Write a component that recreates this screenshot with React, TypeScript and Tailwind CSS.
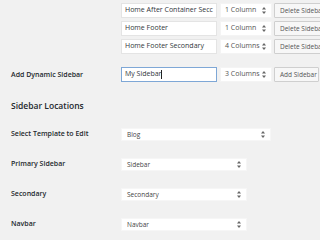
import React from "react";

const font = { fontFamily: '"Open Sans", "Liberation Sans", sans-serif' };

const Arrows: React.FC = () => (
    <svg width="4" height="7" viewBox="0 0 4 7" className="shrink-0">
        <path d="M2 0 L4 2.6 L0 2.6 Z" fill="#666" />
        <path d="M2 7 L4 4.4 L0 4.4 Z" fill="#666" />
    </svg>
);

const SmallSelect: React.FC<{ label: string }> = ({ label }) => (
    <div className="w-[52px] h-[15px] bg-white flex items-center justify-between pl-[4px] pr-[5px] text-[7px] text-[#555] shrink-0 border border-[#f4f4f4]">
        <span className="whitespace-nowrap">{label}</span>
        <Arrows />
    </div>
);

const TextBox: React.FC<{ value: string; focused?: boolean }> = ({ value, focused }) => (
    <div
        className={`w-[96px] h-[15px] bg-white flex items-center px-[3px] text-[7px] text-[#32373c] overflow-hidden whitespace-nowrap shrink-0 border ${
            focused ? "border-[#7ea7d6]" : "border-[#e4e4e4]"
        }`}
    >
        {value}
        {focused && <span className="inline-block w-px h-[9px] bg-[#222]" />}
    </div>
);

const GrayButton: React.FC<{ label: string; width: string }> = ({ label, width }) => (
    <div
        className={`${width} h-[15px] bg-[#f7f7f7] border border-[#cfcfcf] rounded-[1px] flex items-center pl-[5px] text-[6.5px] text-[#555] whitespace-nowrap shrink-0`}
    >
        {label}
    </div>
);

const sidebars = [
    { name: "Home After Container Secc", cols: "1 Column" },
    { name: "Home Footer", cols: "1 Column" },
    { name: "Home Footer Secondary", cols: "4 Columns" },
];

const locations = [
    { label: "Select Template to Edit", value: "Blog", wide: true },
    { label: "Primary Sidebar", value: "Sidebar" },
    { label: "Secondary", value: "Secondary" },
    { label: "Navbar", value: "Navbar" },
];

const App: React.FC = () => {
    return (
        <div className="w-[320px] h-[240px] bg-[#f1f1f1] overflow-hidden" style={font}>
            <div className="pt-[3px] flex flex-col gap-[3px]">
                {sidebars.map((s) => (
                    <div key={s.name} className="flex items-center ml-[121px]">
                        <TextBox value={s.name} />
                        <div className="w-[3px] shrink-0" />
                        <SmallSelect label={s.cols} />
                        <div className="w-[2px] shrink-0" />
                        <GrayButton label="Delete Sidebar" width="w-[60px]" />
                    </div>
                ))}
            </div>

            <div className="flex items-center mt-[13px]">
                <div className="w-[121px] pl-[11px] pt-[2px] text-[7px] font-semibold text-[#23282d] shrink-0">
                    Add Dynamic Sidebar
                </div>
                <TextBox value="My Sidebar" focused />
                <div className="w-[3px] shrink-0" />
                <SmallSelect label="3 Columns" />
                <div className="w-[2px] shrink-0" />
                <GrayButton label="Add Sidebar" width="w-[45px]" />
            </div>

            <h2 className="pl-[11px] mt-[18px] text-[8.5px] font-semibold text-[#23282d] leading-[12px]">
                Sidebar Locations
            </h2>

            <div className="mt-[16px] flex flex-col gap-[17px]">
                {locations.map((l) => (
                    <div key={l.label} className="flex items-center">
                        <div className="w-[121px] pl-[11px] text-[7px] font-semibold text-[#23282d] shrink-0">
                            {l.label}
                        </div>
                        <div
                            className={`${
                                l.wide ? "w-[150px]" : "w-[126px]"
                            } h-[13px] bg-white border border-[#f6f6f6] flex items-center justify-between pl-[5px] pr-[5px] text-[6.5px] text-[#444]`}
                        >
                            <span>{l.value}</span>
                            <Arrows />
                        </div>
                    </div>
                ))}
            </div>
        </div>
    );
};

export default App;
